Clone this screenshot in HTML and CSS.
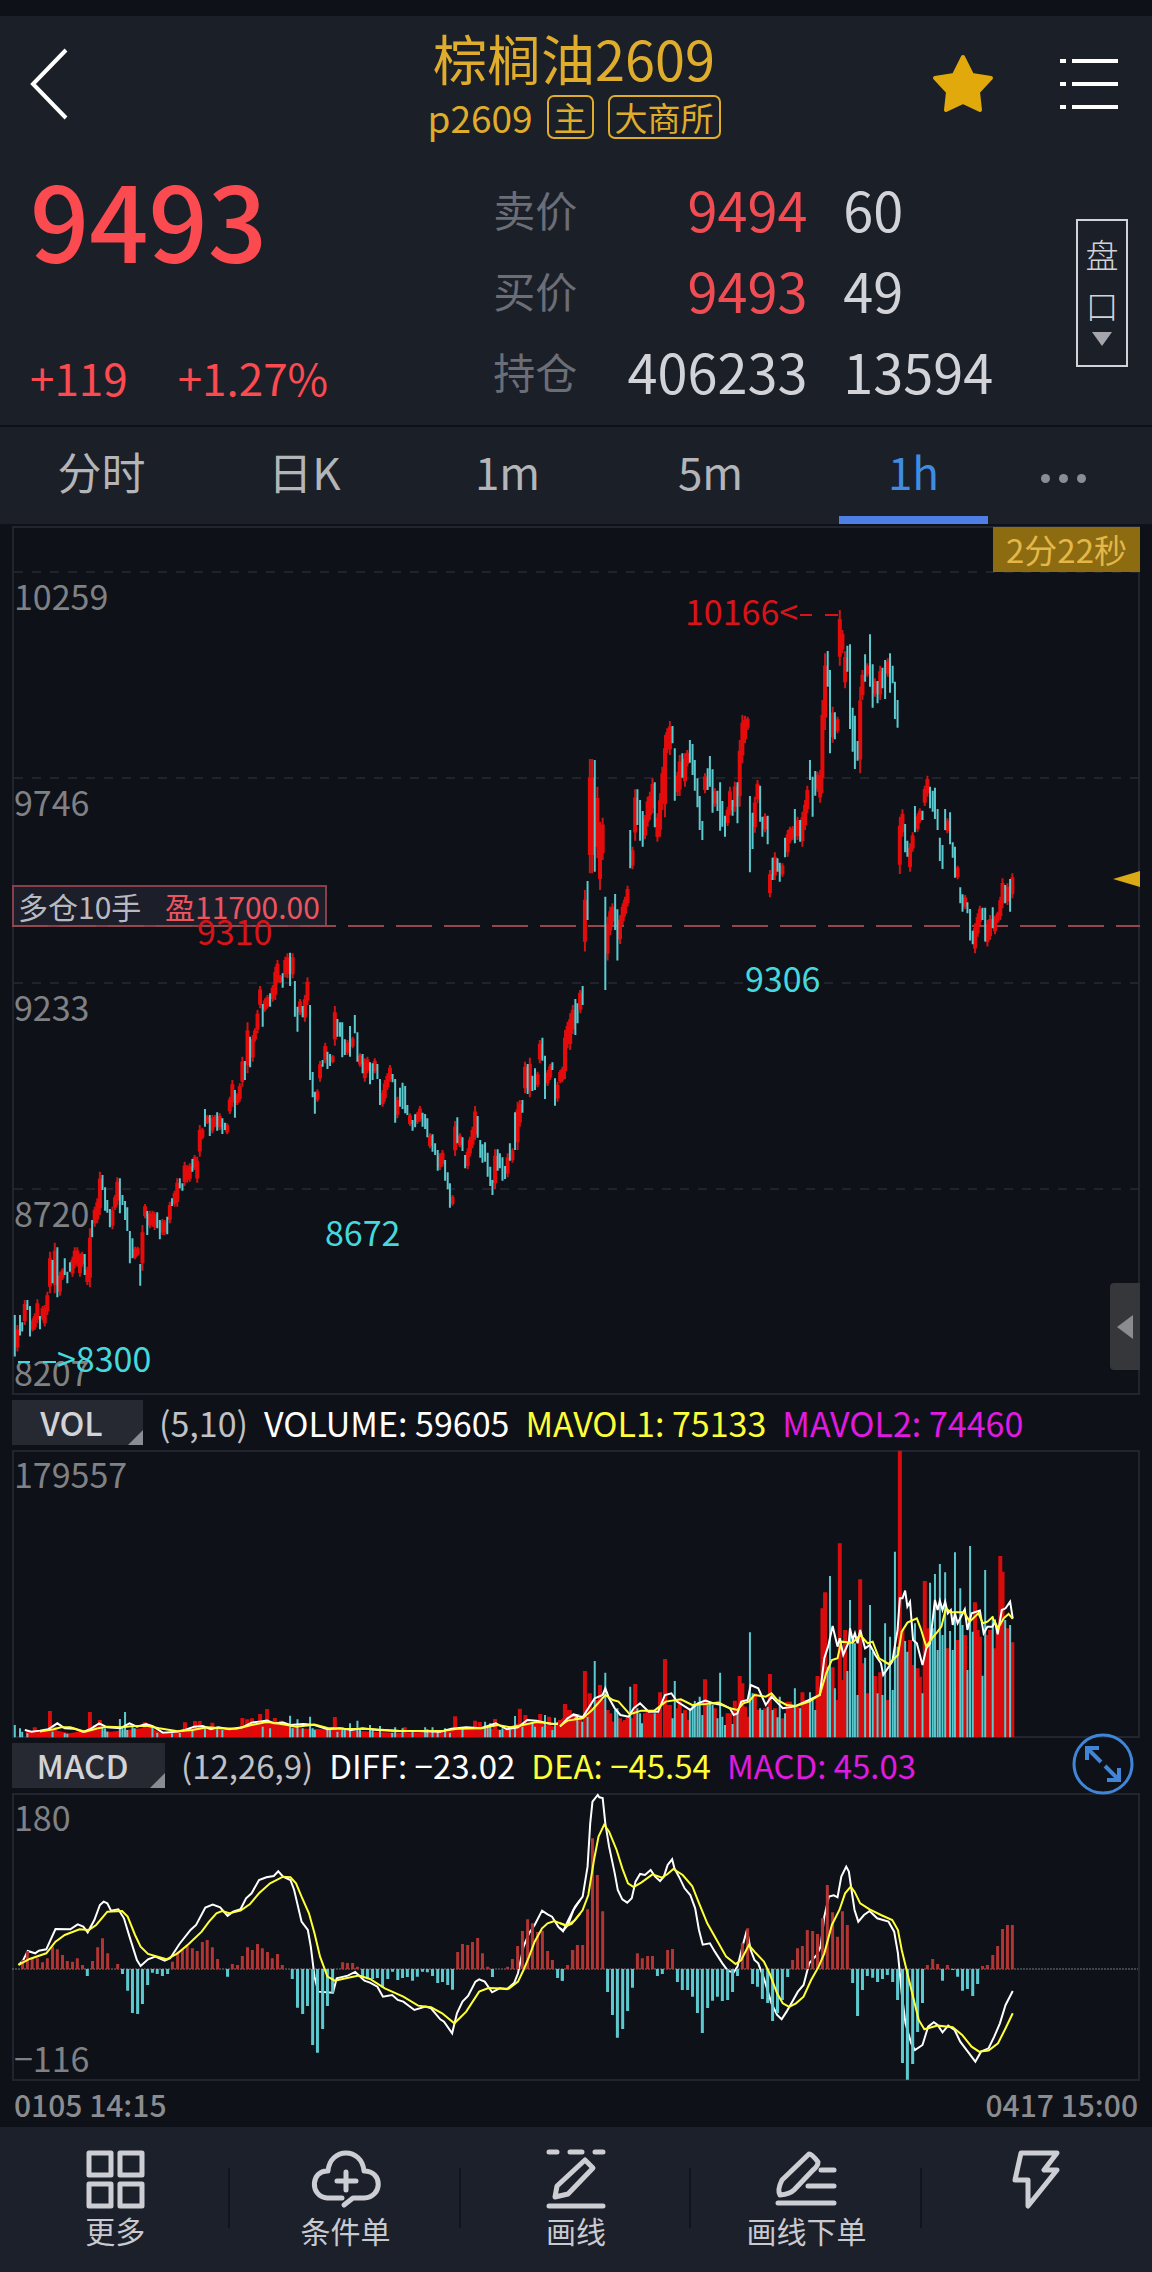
FILE: index.html
```html
<!DOCTYPE html>
<html lang="zh-CN">
<head>
<meta charset="utf-8">
<meta name="viewport" content="width=device-width, initial-scale=1">
<title>棕榈油2609</title>
<link rel="stylesheet" href="styles.css">
</head>
<body>
<header class="topbar">
  <button class="icon-btn back" aria-label="返回"><svg width="40" height="72" viewBox="0 0 40 72"><path d="M36 2L3 36L36 70"/></svg></button>
  <div class="heading">
    <h1 class="title">棕榈油2609</h1>
    <p class="subtitle"><span>p2609</span><span class="badge">主</span><span class="badge">大商所</span></p>
  </div>
  <div class="actions">
    <button class="icon-btn" aria-label="自选"><svg width="64" height="62" viewBox="0 0 64 62"><path class="star" d="M32 4L41 22L60 25L47 39L49 57L32 49L15 57L17 39L4 25L23 22Z"/></svg></button>
    <button class="icon-btn" aria-label="菜单"><svg width="58" height="54" viewBox="0 0 58 54"><path d="M0 4H6M12 4H58M0 27H6M12 27H58M0 50H6M12 50H58"/></svg></button>
  </div>
</header>

<section class="quote">
  <div class="last">
    <strong class="price">9493</strong>
    <p class="change"><span>+119</span><span>+1.27%</span></p>
  </div>
  <table class="depth">
    <tr><th scope="row">卖价</th><td class="up">9494</td><td>60</td></tr>
    <tr><th scope="row">买价</th><td class="up">9493</td><td>49</td></tr>
    <tr><th scope="row">持仓</th><td>406233</td><td>13594</td></tr>
  </table>
  <button class="book"><span>盘</span><span>口</span><svg width="20" height="14" viewBox="0 0 20 14"><path d="M0 0H20L10 14Z"/></svg></button>
</section>

<nav class="periods">
  <button>分时</button><button>日K</button><button>1m</button><button>5m</button><button class="active">1h</button>
  <button class="more" aria-label="更多周期"><i></i><i></i><i></i></button>
</nav>

<main class="charts">
  <div class="pane">
    <svg class="plot" viewBox="12 526 1128 869">
      <rect class="frame" x="13" y="527" width="1126" height="867"/>
      <path class="grid" d="M14 572H1138M14 778H1138M14 983H1138M14 1189H1138"/>
      <g class="axis"><text x="14" y="610">10259</text><text x="14" y="816">9746</text><text x="14" y="1021">9233</text><text x="14" y="1227">8720</text><text x="14" y="1386">8207</text></g>
      <rect class="position-box" x="13" y="886" width="313" height="40"/>
      <path class="position-line" d="M12 926H1140"/>
      <text class="position-side" x="18" y="919">多仓10手</text>
      <text class="position-gain" x="165" y="919">盈11700.00</text>
      <g id="price-left" transform="translate(0 900) scale(.37 .3333)"></g>
      <g id="price-right" transform="translate(560 520) scale(.3776 .3333)"></g>
      <g class="mark high"><text x="197" y="945">9310</text><text x="685" y="625">10166&lt;</text><path d="M800 615H812M825 615H838"/></g>
      <g class="mark low"><text x="325" y="1246">8672</text><text x="745" y="992">9306</text><text x="57" y="1372">&gt;8300</text><path d="M18 1362H30M43 1362H56"/></g>
      <path class="pointer" d="M1113 879L1140 871V887Z"/>
    </svg>
    <span class="countdown">2分22秒</span>
    <button class="drawer" aria-label="展开"><svg width="16" height="24" viewBox="0 0 16 24"><path d="M16 0V24L0 12Z"/></svg></button>
  </div>

  <div class="legend">
    <button class="indicator">VOL</button>
    <span class="params">(5,10)</span><span class="c-white">VOLUME: 59605</span><span class="c-yellow">MAVOL1: 75133</span><span class="c-magenta">MAVOL2: 74460</span>
  </div>
  <div class="pane">
    <svg class="plot" viewBox="12 1450 1128 288">
      <rect class="frame" x="13" y="1451" width="1126" height="286"/>
      <g id="vol-left" transform="translate(0 1380) scale(.37 .3333)"></g>
      <g id="vol-right" transform="translate(560 1380) scale(.3776 .3333)"></g>
      <g class="axis"><text x="14" y="1488">179557</text></g>
    </svg>
  </div>

  <div class="legend compact">
    <button class="indicator wide">MACD</button>
    <span class="params">(12,26,9)</span><span class="c-white">DIFF: −23.02</span><span class="c-yellow">DEA: −45.54</span><span class="c-magenta">MACD: 45.03</span>
    <button class="expand" aria-label="全屏"><svg width="62" height="62" viewBox="0 0 62 62"><circle cx="31" cy="31" r="29"/><path d="M29 29L16 16M15 27V15H27M33 33L46 46M35 47H47V35"/></svg></button>
  </div>
  <div class="pane">
    <svg class="plot" viewBox="12 1793 1128 288">
      <rect class="frame" x="13" y="1794" width="1126" height="286"/>
      <path class="zero" d="M12 1969H1138"/>
      <g id="macd-left" transform="translate(0 1740) scale(.37 .3333)"></g>
      <g id="macd-right" transform="translate(560 1740) scale(.3776 .3333)"></g>
      <g class="axis"><text x="14" y="1831">180</text><text x="14" y="2072">−116</text></g>
    </svg>
  </div>
  <p class="dates"><time>0105 14:15</time><time>0417 15:00</time></p>
</main>

<nav class="toolbar">
  <button><svg width="64" height="64" viewBox="0 0 64 64"><path d="M6 6H28V28H6ZM37 6H59V28H37ZM6 37H28V59H6ZM37 37H59V59H37Z"/></svg><span>更多</span></button>
  <button><svg width="72" height="64" viewBox="0 0 72 64"><path d="M32 51H17C-1 49 1 23 18 24C20 0 52 0 54 24C73 24 73 50 54 51H43L34 58M36 25V43M27 34H46"/></svg><span>条件单</span></button>
  <button><svg width="64" height="64" viewBox="0 0 64 64"><path d="M5 5H13M26 5H38M51 5H59M5 59H59M41 13L49 21L24 47L11 50L13 39Z"/></svg><span>画线</span></button>
  <button><svg width="64" height="64" viewBox="0 0 64 64"><path d="M4 56H60M34 39H60M47 23H60M35 7Q37 6 44 15Q44 19 39 23L20 43Q16 47 6 48Q3 43 8 33Z"/></svg><span>画线下单</span></button>
  <button aria-label="闪电下单"><svg width="64" height="64" viewBox="0 0 64 64"><path d="M16 6H52L39 23H52L23 59V33H10Z"/></svg><span></span></button>
</nav>
<script src="chart.js"></script>
</body>
</html>
```
FILE: styles.css
```css
* { box-sizing: border-box; }
body { margin: 0; padding-top: 16px; background: #0e1118; color: #d2d3d8; font-family: "Noto Sans CJK SC", "Noto Sans", sans-serif; }
h1, p { margin: 0; font-weight: 400; }
button { margin: 0; padding: 0; border: 0; background: none; color: inherit; font: inherit; }
svg { display: block; fill: none; }

.topbar { display: grid; grid-template-columns: 1fr auto 1fr; align-items: center; height: 136px; padding: 0 34px 0 30px; background: #1b1f28; }
.icon-btn svg { stroke: #fff; stroke-width: 4; }
.back { justify-self: start; }
.heading { padding-bottom: 4px; text-align: center; color: #dfac2b; }
.title { margin-bottom: 4px; font-size: 54px; line-height: 66px; }
.subtitle { display: flex; justify-content: center; align-items: center; gap: 14px; font-size: 37px; line-height: 44px; }
.badge { padding: 0 5px; border: 2px solid #dfac2b; border-radius: 7px; font-size: 33px; line-height: 40px; }
.actions { display: flex; justify-content: flex-end; align-items: center; gap: 65px; }
.icon-btn .star { fill: #e1a90b; stroke: #e1a90b; stroke-linejoin: round; }

.quote { display: flex; height: 275px; background: #1b1f28; border-bottom: 2px solid #0e1118; }
.last { display: flex; flex-direction: column; justify-content: space-between; flex: 0 0 43%; padding: 6px 0 18px 30px; color: #fb4a50; }
.price { font-size: 104px; font-weight: 500; line-height: 120px; }
.change { display: flex; gap: 50px; font-size: 44px; line-height: 60px; }
.depth { align-self: flex-start; margin: 16px 0 0 -2px; border-collapse: collapse; font-size: 54px; line-height: 81px; }
.depth th { width: 130px; padding: 0; color: #6b6d77; font-size: 42px; font-weight: 400; text-align: left; }
.depth td { padding: 0; }
.depth td:nth-child(2) { width: 184px; text-align: right; }
.depth td:nth-child(3) { padding-left: 36px; }
.depth .up { color: #f04c54; }
.book { display: flex; flex-direction: column; align-items: center; justify-content: space-between; align-self: flex-start; width: 52px; height: 148px; margin: 67px 24px 0 auto; padding: 10px 0 19px; border: 2px solid #d2d3d8; font-size: 33px; font-weight: 300; line-height: 46px; }
.book path { fill: #a5a6ab; }

.periods { display: grid; grid-template-columns: repeat(5, 203fr) 137fr; height: 97px; background: #1b1f28; color: #b4b5b8; font-size: 44px; }
.periods button { position: relative; padding-bottom: 10px; }
.periods .active { color: #3f8de0; }
.periods .active::after { content: ""; position: absolute; left: 27px; right: 27px; bottom: 0; height: 8px; background: #4f7fe4; }
.periods .more { display: flex; justify-content: center; align-items: center; gap: 9px; padding: 6px 40px 0 0; }
.more i { width: 9px; height: 9px; border-radius: 50%; background: #8b8d94; }

.charts { padding: 2px 12px 0; }
.pane { position: relative; }
.plot { width: 100%; height: auto; font-size: 34px; }
.plot path, .plot rect { vector-effect: non-scaling-stroke; }
.frame { stroke: #22252f; stroke-width: 2; }
.grid { stroke: #20232b; stroke-width: 2; stroke-dasharray: 9 9; }
.axis { fill: #808184; }
.position-box { fill: #1c1e29; stroke: #87404a; stroke-width: 2; }
.position-line { stroke: #94484c; stroke-width: 2; stroke-dasharray: 36 12; }
.position-side { fill: #b9bac0; font-size: 30px; }
.position-gain { fill: #ec5560; font-size: 30px; }
.mark path { stroke-width: 2; }
.high { fill: #d91318; }
.high path { stroke: #d91318; }
.low { fill: #45d8dc; }
.low path { stroke: #45d8dc; }
.pointer { fill: #dca917; }
.wick-up { stroke: #c91515; stroke-width: 2; }
.body-up { stroke: #e50b0b; stroke-width: 4; }
.bar-down { stroke: #5cc9cf; stroke-width: 2; }
.area-up { fill: #e80606; }
.vol-up { stroke: #d80c0c; stroke-width: 4; }
.macd-up { stroke: #b13532; stroke-width: 3; }
.macd-down { stroke: #5cc9cf; stroke-width: 3; }
.line-a { stroke: #fff; stroke-width: 2; }
.line-b { stroke: #ffff38; stroke-width: 2; }
.zero { stroke: #77797f; stroke-width: 1; stroke-dasharray: 2 1; }
.countdown { position: absolute; top: 1px; right: 0; padding: 0 13px; background: #8c6b11; color: #e3b748; font-size: 33px; line-height: 45px; }
.drawer { position: absolute; right: 0; bottom: 25px; display: flex; justify-content: center; align-items: center; width: 30px; height: 87px; border-radius: 4px 0 0 4px; background: #36373b; }
.drawer path { fill: #8b8c8e; }

.legend { position: relative; display: flex; align-items: center; gap: 16px; height: 55px; font-size: 34px; line-height: 45px; white-space: nowrap; }
.legend.compact { font-size: 33px; }
.indicator { position: relative; width: 131px; height: 45px; padding-right: 12px; background: #272932; color: #d2d3d6; font-size: 33px; font-weight: 500; line-height: 45px; }
.indicator.wide { width: 153px; }
.indicator::after { content: ""; position: absolute; right: 0; bottom: 0; width: 15px; height: 15px; background: #8b8c93; clip-path: polygon(100% 0, 100% 100%, 0 100%); }
.params { color: #c0c1c6; }
.c-white { color: #fff; }
.c-yellow { color: #ffff38; }
.c-magenta { color: #e01ae0; }
.expand { position: absolute; right: 6px; top: -5px; z-index: 1; }
.expand svg { stroke: #3f86d8; stroke-width: 4; }
.expand circle { stroke-width: 3; }
.dates { display: flex; justify-content: space-between; padding: 0 2px; color: #8b8c8f; font-size: 30px; font-weight: 500; line-height: 46px; }

.toolbar { display: grid; grid-template-columns: repeat(5, 1fr); height: 145px; background: #1c202a; }
.toolbar button { position: relative; display: flex; flex-direction: column; align-items: center; padding-top: 20px; color: #c9cad0; font-size: 30px; line-height: 38px; }
.toolbar button + button::before { content: ""; position: absolute; left: -2px; top: 41px; width: 2px; height: 60px; background: #11141b; }
.toolbar svg { stroke: #cdced3; stroke-width: 5; stroke-linecap: round; stroke-linejoin: round; }
```
FILE: chart.js
```js
// Each series is a flat list of numbers in the coordinate space of its group.
const NS = "http://www.w3.org/2000/svg";
const groups = (s, n) => {
  const v = s.trim().split(/[\s,]+/).map(Number), out = [];
  for (let i = 0; i + n <= v.length; i += n) out.push(v.slice(i, i + n));
  return out;
};
const add = (id, cls, d) => {
  const p = document.createElementNS(NS, "path");
  p.setAttribute("class", cls);
  p.setAttribute("d", d);
  document.getElementById(id).append(p);
};
const candles = (id, up, down) => {
  const u = groups(up, 3);
  add(id, "wick-up", u.map(([x, a, b]) => `M${x} ${a}V${b}`).join(""));
  add(id, "body-up", u.map(([x, a, b]) => `M${x} ${a + (b - a) * .16}V${b - (b - a) * .16}`).join(""));
  add(id, "bar-down", groups(down, 3).map(([x, a, b]) => `M${x} ${a}V${b}`).join(""));
};
const bars = (id, cls, base, s) => add(id, cls, groups(s, 2).map(([x, y]) => `M${x} ${base}V${y}`).join(""));
const line = (id, cls, s) => add(id, cls, "M" + groups(s, 2).map(p => p.join(" ")).join("L"));

candles("price-left",
`47 1275 1355,67 1200 1275,88 1255 1295,94 1240 1290,101 1198 1270,115 1218 1262,121 1215 1280,128 1175 1245,135 1055 1180,148 1028 1180,162 1115 1187,169 1105 1140,196 1070 1130,202 1042 1105,209 1042 1100,216 1060 1130,222 1055 1100,236 1100 1155,243 985 1162,256 920 980,263 895 970,270 815 945,304 920 988,311 885 930,317 832 915,365 1040 1078,372 1040 1068,385 975 1112,392 912 955,405 932 985,412 932 980,418 935 990,439 957 1005,445 960 1005,459 905 970,472 872 920,479 835 920,499 785 858,506 795 848,513 790 845,526 765 810,533 770 848,540 675 770,547 683 718,560 645 672,574 645 700,581 645 682,594 640 690,614 670 703,621 590 642,628 540 620,641 580 615,648 550 605,655 470 560,669 367 520,683 405 485,689 385 425,696 330 400,703 258 325,716 295 335,723 285 325,737 255 305,744 200 300,750 180 250,757 225 250,771 170 232,777 160 235,791 160 235,811 297 345,824 285 365,831 232 315,858 568 605,865 483 545,879 428 490,899 465 490,905 318 437,939 420 465,953 410 445,973 460 500,986 475 545,993 470 520,1013 475 520,1034 570 620,1040 540 605,1047 520 570,1054 495 545,1074 590 655,1108 640 678,1128 635 672,1135 618 665,1162 700 745,1189 760 810,1196 750 800,1223 885 917,1230 663 768,1243 700 742,1264 745 808,1270 710 770,1277 680 745,1284 618 720,1338 748 868,1372 760 832,1385 745 788,1399 605 750,1405 600 680,1419 485 580,1432 473 592,1453 515 562,1459 420 490,1480 510 558,1487 492 540,1507 545 605,1514 510 550,1520 500 547,1527 390 537,1534 365 445,1541 340 450,1548 315 402,1568 270 320`,
`40 1245 1370,54 1245 1307,60 1267 1295,74 1200 1230,81 1218 1310,108 1248 1288,142 1080 1150,155 1042 1192,175 1075 1125,182 1115 1150,189 1087 1115,229 1062 1125,249 960 1012,277 825 870,284 862 932,290 900 938,297 927 982,324 835 940,331 885 915,338 903 960,344 922 993,351 993 1090,358 1015 1075,379 1092 1157,398 933 1005,425 937 985,432 960 1018,452 950 1003,465 895 918,486 835 865,493 850 872,520 777 815,554 627 680,567 645 708,587 637 692,601 655 702,608 668 690,635 570 653,662 483 540,676 410 502,710 312 380,730 280 320,764 220 263,784 158 258,797 243 350,804 320 395,818 318 352,838 315 540,845 516 592,851 575 641,872 480 500,885 455 507,892 462 498,912 357 410,919 367 410,925 367 472,932 418 465,946 378 470,959 345 400,966 397 485,980 462 520,1000 487 553,1007 490 540,1020 492 537,1027 537 615,1061 522 547,1068 537 668,1081 563 620,1088 548 627,1095 558 640,1101 615 645,1115 660 692,1122 643 682,1142 638 680,1149 642 687,1155 655 712,1169 703 755,1176 730 765,1183 750 812,1203 780 842,1210 817 868,1216 850 923,1236 652 730,1250 712 753,1257 765 805,1291 648 713,1298 720 773,1304 733 788,1311 727 785,1318 758 830,1325 800 858,1331 840 885,1345 748 812,1351 760 805,1358 772 842,1365 798 837,1378 730 782,1392 637 750,1412 600 638,1426 492 582,1439 527 573,1446 505 570,1466 413 482,1473 467 597,1493 487 510,1500 535 617,1555 297 405,1561 310 370`);

candles("price-right",
`54 1412 1480,66 1110 1295,79 717 1060,85 717 1060,99 800 1015,106 905 1110,113 893 1020,126 1190 1322,133 1160 1245,139 1150 1215,159 1185 1272,166 1150 1215,172 1130 1190,179 1097 1160,192 980 1048,199 808 962,225 885 958,232 830 920,238 815 900,245 775 880,258 880 965,265 820 950,271 740 870,278 645 892,284 625 700,291 603 705,311 755 828,317 705 828,331 700 800,337 690 740,384 760 820,410 805 860,444 860 918,450 800 885,463 785 875,476 660 860,483 585 730,490 587 670,497 590 630,516 830 938,523 780 850,543 880 937,556 1050 1132,569 997 1080,589 1030 1070,603 930 1010,609 920 970,616 918 960,629 890 960,642 875 980,649 840 930,655 797 880,682 755 815,689 750 848,695 540 820,702 400 630,722 560 668,735 590 640,741 270 437,748 330 400,755 393 505,795 500 760,801 450 540,814 430 470,834 475 530,848 437 540,868 415 470,900 890 1062,907 868 950,927 970 1055,934 937 995,947 880 935,953 865 910,966 797 858,973 767 830,1026 895 940,1053 1037 1078,1073 1125 1167,1099 1210 1300,1106 1180 1250,1112 1157 1215,1132 1200 1280,1139 1185 1260,1152 1187 1243,1159 1175 1210,1166 1130 1200,1172 1075 1165,1185 1090 1155,1198 1060 1135`,
`60 1398 1455,73 1083 1200,92 720 1055,120 1130 1410,146 1122 1230,152 1168 1322,186 930 1045,205 808 915,212 840 962,219 873 980,251 787 922,298 618 670,304 685 842,324 700 773,344 660 728,351 672 765,357 720 812,364 775 862,370 828 930,377 903 960,391 745 810,397 708 800,404 748 878,417 812 873,424 787 932,430 843 920,437 887 950,457 840 887,470 787 910,503 828 1057,510 878 987,530 797 905,536 890 950,550 887 973,563 1013 1080,576 1015 1055,582 1028 1085,596 953 1012,622 867 970,636 900 965,662 720 780,669 770 890,676 753 827,709 393 500,715 450 700,728 577 658,761 377 455,768 373 627,775 563 695,781 587 747,788 663 722,808 403 485,821 343 500,828 433 563,841 483 550,854 443 505,861 420 537,874 400 518,881 437 490,887 485 597,894 540 623,914 912 997,920 962 1010,940 858 937,960 872 900,980 800 865,987 812 875,993 803 897,1000 867 930,1006 953 1023,1013 975 1047,1020 867 930,1033 877 973,1040 967 1013,1046 980 1073,1060 1102 1150,1066 1123 1175,1079 1147 1180,1086 1167 1262,1093 1232 1273,1119 1163 1200,1126 1163 1265,1146 1162 1225,1179 1095 1150,1192 1077 1175`);

add("vol-left", "area-up", "M70 1072V1055L135 1048L190 1060L243 1048L300 1055L405 1042L440 1062L500 1045L570 1045L640 1050L690 1035L740 1030L800 1045L870 1048L960 1052L1060 1058L1200 1055L1230 1045L1290 1040L1360 1050L1400 1030L1460 1030L1500 1040L1520 1015L1550 1000L1568 1010V1072Z");
bars("vol-left", "vol-up", 1072, `94 1042,135 993,148 1040,243 996,256 1035,270 1020,391 1027,405 1032,500 1027,527 1023,540 1023,574 1028,655 1014,668 1018,681 1015,703 1002,722 987,743 1014,760 1022,905 1011,1094 1042,1230 1009,1284 1022,1297 1026,1338 1017,1405 986,1420 1005,1460 1002,1484 1010,1527 972,1540 990`);
bars("vol-left", "bar-down", 1072, `40 1035,54 1045,60 1055,74 1060,142 1055,175 1060,182 1062,277 1042,284 1045,290 1055,324 1017,331 1040,338 996,344 1050,358 1040,364 1045,412 1035,425 1058,465 1060,486 1058,520 1050,554 1045,587 1040,601 1050,710 1040,730 1045,784 1007,791 1045,804 1018,818 1045,838 1010,845 1045,851 1050,885 1050,892 1045,912 1055,925 1050,932 1048,946 1030,966 1022,973 1045,1000 1035,1007 1050,1027 1038,1060 1058,1068 1042,1088 1045,1115 1050,1149 1042,1155 1048,1169 1042,1183 1050,1203 1045,1216 1058,1250 1045,1311 1025,1318 1040,1325 1030,1351 1050,1358 1045,1378 1050,1392 1008,1412 1040,1439 1030,1446 1040,1466 1040,1473 1005,1493 1050,1500 1013,1561 1015`);
line("vol-left", "line-a", `67 1050,85 1055,108 1052,130 1048,155 1030,175 1045,200 1046,225 1056,243 1048,268 1030,290 1042,325 1045,350 1030,370 1040,395 1032,415 1040,440 1058,480 1055,500 1050,525 1040,548 1038,570 1048,590 1042,620 1048,655 1042,680 1028,700 1025,722 1022,740 1030,765 1028,785 1035,820 1032,850 1035,885 1048,920 1045,950 1050,980 1045,1020 1050,1080 1053,1130 1053,1190 1055,1220 1046,1260 1042,1300 1045,1340 1030,1370 1048,1400 1042,1425 1020,1450 1022,1490 1032,1515 1032,1550 1003,1568 1008`);
line("vol-left", "line-b", `108 1055,145 1048,165 1042,190 1042,230 1055,265 1045,290 1040,330 1042,360 1038,400 1038,430 1045,480 1054,520 1050,560 1042,600 1045,640 1046,680 1035,722 1026,760 1032,800 1040,850 1034,885 1044,930 1046,1000 1047,1080 1053,1150 1053,1200 1052,1240 1046,1300 1045,1345 1035,1380 1042,1410 1036,1450 1026,1500 1032,1540 1020,1568 1012`);

bars("vol-right", "vol-up", 1072, `0 1020,7 1020,13 973,20 990,26 1010,33 1010,40 1025,53 1005,66 873,79 940,86 990,99 960,106 915,113 960,126 990,133 1000,139 1025,159 1015,166 1025,172 1020,179 1010,192 1015,199 912,225 1000,232 990,238 1000,245 1000,258 1000,265 937,278 837,284 975,291 975,311 985,317 960,331 990,337 1020,384 898,410 985,444 1000,450 1000,463 962,476 888,483 910,490 980,497 1010,516 940,523 990,543 985,556 882,569 985,589 1015,603 965,609 965,616 985,629 980,642 937,649 960,655 970,682 888,689 940,695 685,702 637,722 862,735 960,741 490,748 900,755 750,795 598,801 850,814 940,834 888,848 877,868 960,900 212,907 750,927 780,934 855,947 865,953 890,966 603,973 745,1026 805,1053 780,1073 765,1099 667,1106 750,1112 770,1132 765,1139 750,1152 805,1159 750,1166 528,1172 575,1185 745,1198 787`);
bars("vol-right", "bar-down", 1072, `46 1022,59 1025,73 1010,92 843,120 878,146 990,152 985,186 920,205 985,212 1000,217 1030,251 1000,298 1015,304 903,324 1000,344 985,351 975,357 963,364 975,370 950,377 1005,391 975,397 970,404 975,417 1015,424 878,430 1010,437 1035,457 1032,470 1000,503 757,510 940,530 985,536 990,550 980,563 990,576 1012,582 950,596 1000,622 925,636 985,662 937,669 960,676 990,709 860,715 588,728 925,761 873,768 660,775 780,781 790,788 945,808 833,821 675,828 815,841 940,854 945,861 730,874 770,881 930,887 515,894 800,914 783,920 815,940 730,960 940,980 608,987 745,993 582,1000 810,1006 552,1013 765,1020 577,1033 753,1040 810,1046 517,1060 625,1066 735,1079 870,1086 498,1093 755,1119 887,1126 570,1146 708,1179 720,1192 735`);
line("vol-right", "line-a", `0 1040,20 1015,35 1005,60 1012,75 985,92 955,113 945,120 925,130 955,145 985,160 1005,182 1010,195 985,212 970,235 995,260 995,278 945,295 940,310 965,345 990,365 970,385 962,405 970,430 975,450 985,460 1005,470 1000,480 965,497 960,505 915,525 925,545 975,560 950,590 985,620 980,650 965,688 945,700 835,710 800,722 738,735 800,741 775,750 825,765 785,768 745,775 780,781 760,788 790,795 750,808 805,821 795,835 825,850 850,856 885,880 845,894 750,900 655,907 655,914 632,920 680,927 665,935 780,945 790,960 855,970 805,980 790,993 660,1000 690,1006 662,1013 690,1020 665,1027 700,1035 690,1040 735,1046 700,1053 730,1072 688,1079 750,1090 700,1112 692,1122 760,1132 740,1145 740,1152 725,1159 763,1170 690,1180 685,1192 665,1199 715`);
line("vol-right", "line-b", `0 1038,20 1022,60 1015,85 990,120 945,140 960,155 965,185 1003,215 992,250 992,280 965,320 958,350 975,385 972,420 968,450 985,470 990,485 970,500 965,515 945,545 950,560 940,575 960,600 975,625 978,660 965,688 945,705 880,720 840,735 835,745 785,775 788,795 765,815 790,828 785,845 835,870 852,895 825,905 755,920 728,945 715,955 745,970 800,985 775,1000 755,1010 740,1022 685,1035 697,1070 697,1085 725,1108 700,1120 730,1132 725,1145 712,1160 745,1175 715,1188 702,1199 717`);

line("macd-left", "line-a", `50 675,62 662,75 633,95 640,105 632,125 628,150 567,190 568,210 553,225 560,237 577,255 540,270 495,280 485,290 490,300 512,320 508,335 535,350 590,370 660,380 678,400 658,420 650,445 662,460 655,485 612,515 570,530 555,555 503,575 494,595 502,615 528,630 515,650 508,665 475,680 460,700 420,720 412,740 408,752 394,765 410,785 420,795 450,815 545,832 570,840 620,850 710,860 755,900 758,910 715,940 707,960 696,985 722,1000 728,1020 740,1035 770,1060 765,1075 780,1090 785,1120 810,1150 800,1165 805,1190 838,1200 845,1222 880,1235 820,1250 785,1265 768,1285 725,1295 718,1310 725,1330 757,1350 745,1370 748,1390 728,1400 700,1415 620,1430 580,1445 555,1465 512,1480 523,1492 530,1510 562,1522 572,1535 555,1550 510,1568 480`);
bars("macd-left", "macd-up", 687, `61 660,74 633,87 655,101 655,115 667,128 655,142 620,155 628,169 645,182 663,196 665,209 655,223 675,250 663,264 622,277 595,291 640,318 672,466 665,480 635,493 630,506 618,520 625,533 633,547 606,560 600,574 622,588 657,628 672,642 675,655 648,669 622,682 630,696 612,709 625,723 636,736 655,750 642,763 675,926 667,939 669,953 669,966 680,1237 636,1250 612,1264 615,1277 606,1291 594,1304 640,1318 680,1372 680,1385 657,1399 618,1412 573,1426 538,1439 550,1453 576,1466 572,1480 633,1493 660,1534 675,1548 630,1561 615`);
bars("macd-left", "macd-down", 687, `236 708,331 702,345 752,358 819,372 822,385 792,399 735,412 698,425 702,439 708,453 702,615 710,790 717,804 803,818 822,831 798,845 915,858 938,872 867,885 798,899 758,980 708,993 714,1007 717,1020 714,1034 742,1048 717,1061 695,1075 720,1088 714,1101 711,1115 722,1128 710,1142 695,1155 697,1169 708,1183 729,1196 726,1210 735,1223 749,1331 711,1507 714,1520 722`);
line("macd-left", "line-b", `50 675,80 657,125 640,150 605,175 585,215 568,240 570,260 555,290 515,330 513,345 530,365 585,380 620,400 642,450 658,480 640,510 612,545 575,565 545,585 520,600 513,620 520,650 512,675 493,700 460,730 430,765 410,785 412,800 430,815 470,835 520,850 580,865 650,885 710,905 722,935 715,970 707,1000 717,1040 745,1090 770,1130 797,1165 802,1195 820,1228 850,1260 815,1295 755,1320 744,1375 746,1400 725,1415 690,1430 650,1445 605,1465 565,1480 550,1498 543,1515 550,1530 558,1545 552,1568 520`);

line("macd-right", "line-a", `0 565,8 574,20 545,40 500,60 470,73 380,80 250,86 185,100 165,104 172,113 174,120 250,130 320,145 400,153 450,165 478,178 488,190 475,200 425,212 402,225 405,240 390,252 410,265 423,275 410,285 375,297 358,303 385,315 410,330 445,345 465,358 505,368 570,378 614,397 610,410 635,430 670,445 693,460 697,470 680,483 620,495 570,505 630,515 660,525 670,540 715,560 790,575 825,587 838,600 815,615 785,630 755,645 735,660 670,680 645,690 620,700 530,712 470,725 466,735 472,745 410,758 380,765 395,772 450,780 510,790 545,805 525,820 513,840 535,870 545,885 575,895 640,905 760,915 850,930 910,940 930,960 915,975 860,990 847,1000 855,1013 877,1028 857,1045 870,1060 905,1080 935,1100 965,1115 935,1135 925,1150 890,1165 850,1180 795,1199 753`);
bars("macd-right", "macd-up", 687, `20 675,33 630,46 615,60 615,73 508,86 295,99 405,113 514,205 640,218 655,232 648,245 648,285 630,298 627,483 610,497 565,616 660,629 625,642 618,655 570,669 573,682 582,695 535,708 435,722 517,735 590,748 514,761 555,973 675,987 657,1000 672,1026 675,1119 678,1132 675,1146 645,1159 618,1172 567,1185 555,1198 555`);
bars("macd-right", "macd-down", 687, `6 722,126 756,139 825,152 893,166 867,179 813,192 743,258 708,271 702,311 726,324 750,338 750,351 770,364 819,377 879,391 804,404 782,417 770,430 783,444 780,457 756,470 708,510 732,523 740,536 777,550 789,563 843,576 819,589 780,603 711,775 729,788 828,801 750,814 708,828 713,841 726,854 717,867 705,881 726,894 780,907 969,920 1019,934 972,947 876,960 789,1013 722,1040 690,1053 710,1066 752,1079 747,1093 768,1106 732`);
line("macd-right", "line-b", `0 550,20 557,40 540,60 510,75 465,90 360,102 290,117 254,130 275,150 330,165 385,180 430,195 441,215 428,245 403,270 413,285 402,300 387,325 405,350 438,370 495,390 550,415 600,440 650,465 672,480 660,500 615,515 635,540 665,555 700,575 760,590 790,607 801,625 790,645 770,665 720,685 680,700 640,720 555,740 510,755 460,770 440,780 455,795 490,820 508,850 525,880 540,895 570,905 630,920 700,935 770,950 840,965 868,1000 857,1040 862,1065 885,1090 920,1110 935,1135 932,1160 910,1180 865,1199 820`);
```
